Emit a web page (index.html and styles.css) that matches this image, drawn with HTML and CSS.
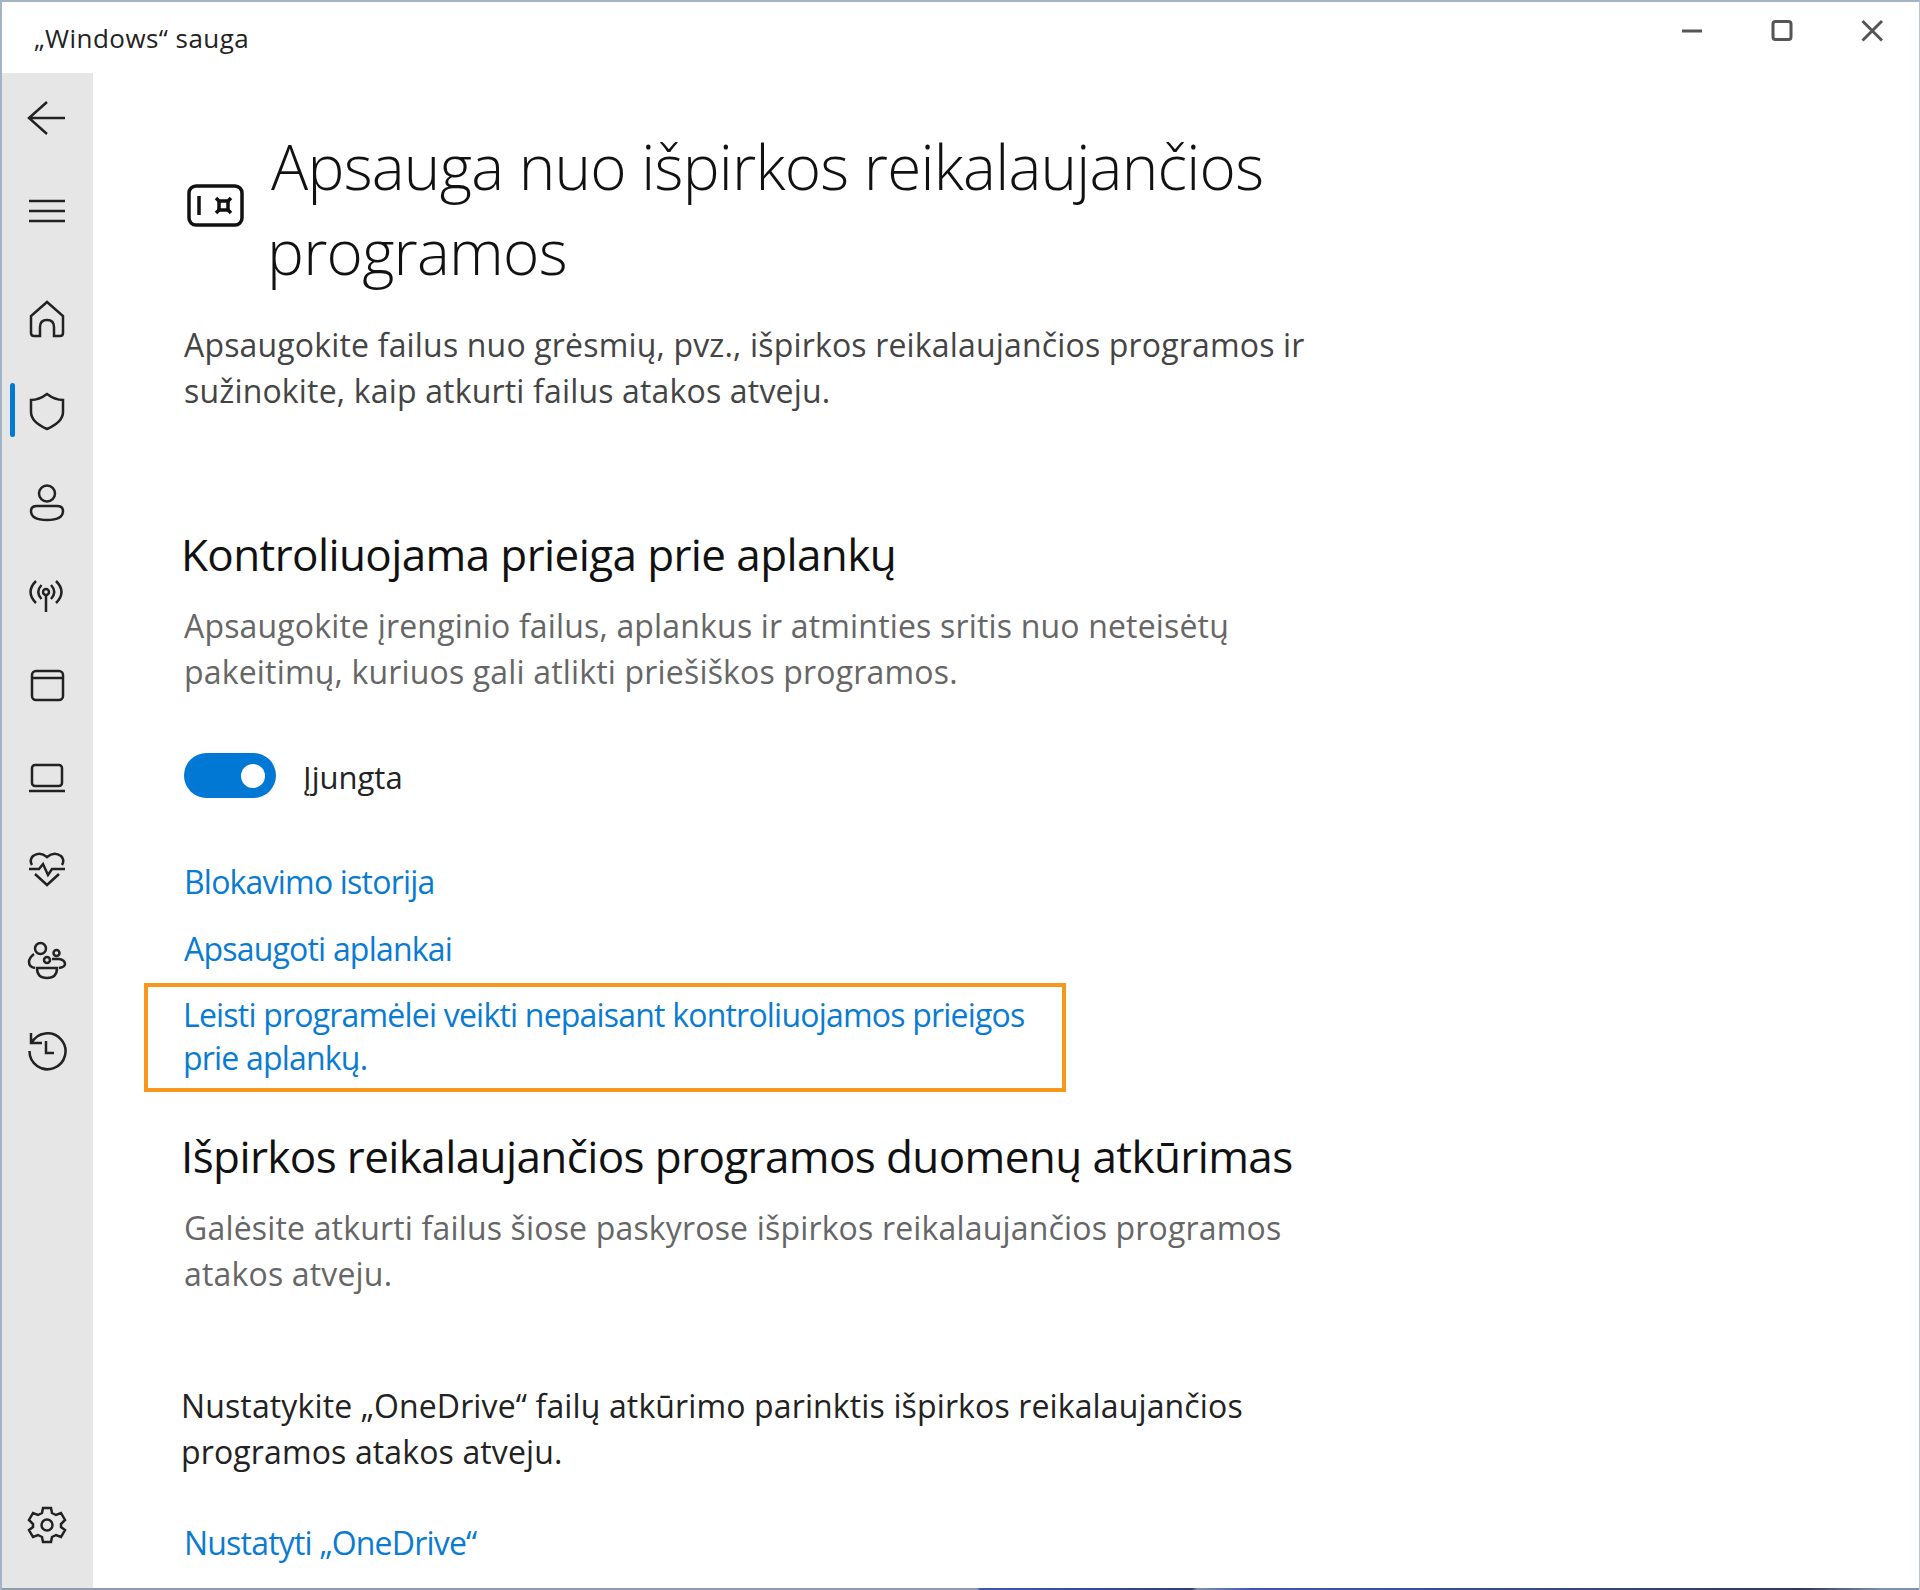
FILE: index.html
```html
<!DOCTYPE html>
<html lang="lt">
<head>
    <meta charset="UTF-8">
    <title>„Windows“ sauga</title>
    <link rel="stylesheet" href="styles.css">
</head>
<body>
    <div class="window">
        <header class="titlebar">
            <span class="app-title">„Windows“ sauga</span>
            <div class="window-controls">
                <svg width="24" height="24" viewBox="0 0 24 24"><path d="M2 12H22"/></svg>
                <svg width="24" height="24" viewBox="0 0 24 24"><rect x="3" y="2.500" width="18" height="18" rx="2.500"/></svg>
                <svg width="24" height="24" viewBox="0 0 24 24"><path d="M2.500 2L22 21.500M22 2L2.500 21.500"/></svg>
            </div>
        </header>
        <div class="app-body">
            <nav class="sidebar">
                <div class="nav-item nav-back"><svg width="40" height="40" viewBox="0 0 40 40"><path d="M2 20H38M20 4L2 20L20 36"/></svg></div>
                <div class="nav-item nav-menu"><svg width="40" height="40" viewBox="0 0 40 40"><path d="M2 10H38M2 20H38M2 30H38"/></svg></div>
                <div class="nav-item nav-first"><svg width="40" height="40" viewBox="0 0 40 40"><path d="M4 32V16L20 2L36 16V33Q36 36 33 36H27V27Q27 20 20 20Q13 20 13 27V36H7Q4 36 4 33Z"/></svg></div>
                <div class="nav-item nav-active"><svg width="40" height="40" viewBox="0 0 40 40"><path d="M20 2Q28 8 36 8V20Q36 30 20 37Q4 30 4 20V8Q12 8 20 2Z"/></svg></div>
                <div class="nav-item"><svg width="40" height="40" viewBox="0 0 40 40"><circle cx="20" cy="10.500" r="8"/><path d="M10 23H30Q36 23 36 28Q36 37 20 37Q4 37 4 28Q4 23 10 23Z"/></svg></div>
                <div class="nav-item"><svg width="40" height="40" viewBox="0 0 40 40"><circle cx="19" cy="17" r="3"/><path d="M19 20V37M9 6Q-2 17 9 28M29 6Q40 17 29 28M14.500 10Q8 17 14.500 24M24 10Q30.500 17 24 24"/></svg></div>
                <div class="nav-item"><svg width="40" height="40" viewBox="0 0 40 40"><rect x="5" y="5" width="31" height="29" rx="4"/><path d="M5 12H36"/></svg></div>
                <div class="nav-item"><svg width="40" height="40" viewBox="0 0 40 40"><rect x="5" y="7" width="30" height="21" rx="3"/><path d="M2 33H38"/></svg></div>
                <div class="nav-item"><svg width="40" height="40" viewBox="0 0 40 40"><path d="M5 16Q2 11 6 7Q13 2 20 8Q27 2 34 7Q38 11 35 16M2 20H12L16 15L21 26L25 20H38M8 25L20 36L32 25"/></svg></div>
                <div class="nav-item"><svg width="40" height="40" viewBox="0 0 40 40"><circle cx="13.500" cy="7.500" r="5.500"/><circle cx="29.500" cy="12" r="3"/><circle cx="20" cy="19" r="3"/><path d="M7 13Q2 17 2 21Q2 26 8 27M25 18H32Q38 19 38 23Q38 26 32 27M10 27H30Q30 37 20 37Q10 37 10 27Z"/></svg></div>
                <div class="nav-item"><svg width="40" height="40" viewBox="0 0 40 40"><path d="M4 1V11H15M4.500 11A18 18 0 1 1 2.500 19M19 9V21H27"/></svg></div>
                <div class="nav-item nav-settings"><svg width="40" height="40" viewBox="0 0 40 40"><circle cx="20" cy="20" r="5.500"/><path d="M16 3H24L25 8L29 10L34 8L38 15L34 19V22L38 25L34 32L29 30L25 32L24 37H16L15 32L11 30L6 32L2 25L6 22V19L2 15L6 8L11 10L15 8Z"/></svg></div>
            </nav>
            <main class="content">
                <div class="page-heading">
                    <svg class="page-icon" width="60" height="44" viewBox="0 0 60 44"><rect x="2" y="2" width="53" height="39" rx="7"/><path d="M12 12V31"/><rect x="32" y="17" width="9" height="9"/><path d="M29 14L33 18M44 14L40 18M29 29L33 25M44 29L40 25"/></svg>
                    <h1>Apsauga nuo išpirkos reikalaujančios programos</h1>
                </div>
                <p class="page-desc">Apsaugokite failus nuo grėsmių, pvz., išpirkos reikalaujančios programos ir sužinokite, kaip atkurti failus atakos atveju.</p>

                <h2 class="section-title section-first">Kontroliuojama prieiga prie aplankų</h2>
                <p class="section-desc">Apsaugokite įrenginio failus, aplankus ir atminties sritis nuo neteisėtų pakeitimų, kuriuos gali atlikti priešiškos programos.</p>
                <div class="toggle-row">
                    <span class="toggle"><span class="toggle-knob"></span></span>
                    <span class="toggle-label">Įjungta</span>
                </div>
                <a class="link link-block link-history" href="#">Blokavimo istorija</a>
                <a class="link link-block link-folders" href="#">Apsaugoti aplankai</a>
                <div class="highlight-box">
                    <a class="link" href="#">Leisti programėlei veikti nepaisant kontroliuojamos prieigos prie aplankų.</a>
                </div>

                <h2 class="section-title section-second">Išpirkos reikalaujančios programos duomenų atkūrimas</h2>
                <p class="section-desc">Galėsite atkurti failus šiose paskyrose išpirkos reikalaujančios programos atakos atveju.</p>
                <p class="onedrive-text">Nustatykite „OneDrive“ failų atkūrimo parinktis išpirkos reikalaujančios programos atakos atveju.</p>
                <a class="link link-block link-onedrive" href="#">Nustatyti „OneDrive“</a>
            </main>
        </div>
        <div class="desktop-strip"></div>
    </div>
</body>
</html>
```

FILE: styles.css
```css
html, body {
    margin: 0;
    height: 100%;
}
body {
    font-family: 'Open Sans', 'Noto Sans', sans-serif;
    background-color: #fff;
    overflow: hidden;
}
.window {
    height: 1590px;
    box-sizing: border-box;
    border-top: 2px solid #a3b4c4;
    border-left: 2px solid #a3b4c4;
    border-right: 1px solid #b8c4d0;
    display: flex;
    flex-direction: column;
}
.titlebar {
    height: 71px;
    flex: none;
    display: flex;
    justify-content: space-between;
    align-items: center;
}
.app-title {
    margin: 1px 0 0 32px;
    font-size: 26px;
    letter-spacing: 0.450px;
    color: #222;
}
.window-controls {
    display: flex;
    gap: 66px;
    margin: -14px 35px 0 0;
}
.window-controls svg {
    fill: none;
    stroke: #555;
    stroke-width: 3;
}
.app-body {
    flex: 1;
    display: flex;
    min-height: 0;
}
.sidebar {
    width: 91px;
    flex: none;
    background-color: #e6e6e6;
    display: flex;
    flex-direction: column;
    align-items: center;
    padding: 25px 1px 0 0;
    box-sizing: border-box;
}
.nav-item {
    height: 40px;
    margin-bottom: 51.500px;
    position: relative;
}
.nav-item svg {
    display: block;
    fill: none;
    stroke: #222;
    stroke-width: 2.500;
}
.nav-back {
    margin-bottom: 53px;
}
.nav-menu {
    margin-bottom: 69px;
}
.nav-active::before {
    content: "";
    position: absolute;
    left: -17px;
    top: -9px;
    width: 5px;
    height: 54px;
    border-radius: 3px;
    background-color: #0078d4;
}
.nav-settings {
    margin-top: auto;
    margin-bottom: 43px;
}
.content {
    flex: 1;
    padding: 51px 0 0 91px;
    min-width: 0;
}
.page-heading {
    display: flex;
    align-items: center;
    gap: 20px;
    width: 1160px;
    margin-left: 3px;
}
.page-icon {
    flex: none;
    fill: none;
    stroke: #111;
    stroke-width: 3.500;
    margin-top: -7px;
}
h1 {
    margin: 0;
    font-size: 62px;
    font-weight: 300;
    line-height: 85px;
    letter-spacing: -0.750px;
    text-indent: 4px;
    color: #111;
}
.page-desc, .section-desc, .onedrive-text {
    margin: 0;
    font-size: 32px;
    line-height: 46px;
    letter-spacing: 0.170px;
}
.page-desc {
    margin: 28px 0 0 0;
    width: 1140px;
    color: #444;
}
.section-title {
    margin: 0 0 0 -3px;
    font-size: 44px;
    font-weight: 400;
    line-height: 60px;
    letter-spacing: -0.600px;
    color: #111;
}
.section-first {
    margin-top: 110px;
}
.section-second {
    margin-top: 34px;
}
.section-desc {
    margin-top: 19px;
    width: 1140px;
    color: #666;
}
.toggle-row {
    display: flex;
    align-items: center;
    gap: 27px;
    margin-top: 58px;
}
.toggle {
    width: 92px;
    height: 45px;
    border-radius: 23px;
    background-color: #0078d4;
    display: flex;
    align-items: center;
    justify-content: flex-end;
    padding-right: 11px;
    box-sizing: border-box;
}
.toggle-knob {
    width: 24px;
    height: 24px;
    border-radius: 50%;
    background-color: #fff;
}
.toggle-label {
    font-size: 31px;
    margin-top: 2px;
    color: #222;
}
.link {
    font-size: 32px;
    line-height: 43px;
    letter-spacing: -0.800px;
    color: #0a7bd2;
    text-decoration: none;
}
.link-block {
    display: block;
}
.link-history {
    margin-top: 62px;
}
.link-folders {
    margin-top: 24px;
}
.highlight-box {
    box-sizing: border-box;
    width: 922px;
    height: 109px;
    margin: 13px 0 0 -40px;
    padding: 6px 0 0 35px;
    border: 4px solid #f7981d;
}
.onedrive-text {
    margin: 86px 0 0 -3px;
    width: 1140px;
    letter-spacing: 0.130px;
    color: #222;
}
.link-onedrive {
    margin-top: 46px;
}
/* the desktop showing under the window edge */
.desktop-strip {
    height: 2px;
    flex: none;
    background: linear-gradient(to right, #8d9dab 0, #8d9dab 975px, #3d5aa8 978px, #2f3f78 1190px, #7d92ac 1195px, #3d5aa8 1250px, #2f3a5c 1800px, #7d92ac 1880px);
}
```
